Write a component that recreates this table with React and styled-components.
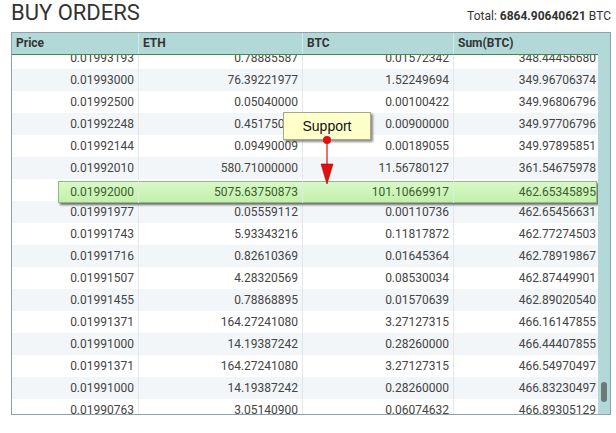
import React from 'react'
import styled, { createGlobalStyle } from 'styled-components'

const GlobalStyle = createGlobalStyle`
  body {
    margin: 0;
    background: #ffffff;
    font-family: Roboto, "Liberation Sans", Arial, sans-serif;
  }
`

const Page = styled.div`
  width: 616px;
  height: 433px;
  padding: 0 5px 0 11px;
  box-sizing: border-box;
  overflow: hidden;
`

const TopBar = styled.div`
  display: flex;
  align-items: flex-end;
  justify-content: space-between;
  height: 32px;
  box-sizing: border-box;
`

const Title = styled.h1`
  margin: 0 0 6px 0;
  font-size: 22px;
  font-weight: 400;
  color: #333333;
  line-height: 26px;
`

const Total = styled.div`
  font-size: 12px;
  color: #333333;
  margin: 0 0 9px 0;
  b {
    font-weight: 700;
  }
`

const Panel = styled.div`
  position: relative;
  display: flex;
  height: 383px;
  border: 1px solid #8fa2a8;
  background: #b3d8d8;
  box-sizing: border-box;
`

const Main = styled.div`
  flex: 1;
  display: flex;
  flex-direction: column;
  min-width: 0;
`

const cols = '126px 164px 151px 1fr'

const HeadRow = styled.div`
  display: grid;
  grid-template-columns: ${cols};
  height: 22px;
  border-bottom: 1px solid #3f8f3f;
  box-sizing: border-box;
`

const HeadCell = styled.div`
  font-size: 12px;
  font-weight: 700;
  color: #333333;
  line-height: 21px;
  padding-left: 4px;
  border-left: ${({ first }) => (first ? 'none' : '1px solid #d3e8e8')};
`

const Body = styled.div`
  flex: 1;
  overflow: hidden;
  background: #ffffff;
`

const Rows = styled.div`
  margin-top: -8px;
`

const Row = styled.div`
  position: relative;
  display: grid;
  grid-template-columns: ${cols};
  height: 22px;
  background: ${({ odd }) => (odd ? '#f2f6f8' : '#ffffff')};

  ${({ lifted }) =>
    lifted &&
    `
    z-index: 1;
    &::before {
      content: '';
      position: absolute;
      left: 46px;
      right: 1px;
      top: 2px;
      height: 20px;
      background: linear-gradient(#d8f9c8, #c2f1aa);
      border: 1px solid #93b882;
      box-shadow: 2px 2px 2px rgba(40, 40, 40, 0.65);
    }
  `}
`

const Cell = styled.div`
  position: relative;
  font-size: 12px;
  color: ${({ lifted }) => (lifted ? '#3b5d2c' : '#444444')};
  line-height: 22px;
  text-align: right;
  padding-right: ${({ last }) => (last ? '2px' : '4px')};
  border-left: ${({ first }) => (first ? 'none' : '1px solid #e2e8ea')};
  ${({ lifted }) => lifted && 'top: 2px;'}
`

const Scrollbar = styled.div`
  width: 12px;
  display: flex;
  flex-direction: column;
  align-items: center;
`

const Thumb = styled.div`
  margin-top: auto;
  margin-bottom: 12px;
  width: 6px;
  height: 20px;
  border-radius: 3px;
  background: #6c7a7c;
`

const Tooltip = styled.div`
  position: absolute;
  z-index: 2;
  left: 271px;
  top: 79px;
  width: 88px;
  height: 28px;
  background: #ffffcc;
  border: 1px solid #a7a78a;
  box-shadow: 2px 2px 2px rgba(70, 70, 70, 0.6);
  font-family: "Liberation Sans", Arial, sans-serif;
  font-size: 14px;
  color: #111111;
  display: flex;
  align-items: center;
  justify-content: center;
  box-sizing: border-box;
`

const Pointer = styled.svg`
  position: absolute;
  z-index: 3;
  left: 306px;
  top: 103px;
  overflow: visible;
`

const rows = [
  ['0.01993193', '0.78885587', '0.01572342', '348.44456680'],
  ['0.01993000', '76.39221977', '1.52249694', '349.96706374'],
  ['0.01992500', '0.05040000', '0.00100422', '349.96806796'],
  ['0.01992248', '0.45175000', '0.00900000', '349.97706796'],
  ['0.01992144', '0.09490009', '0.00189055', '349.97895851'],
  ['0.01992010', '580.71000000', '11.56780127', '361.54675978'],
  ['0.01992000', '5075.63750873', '101.10669917', '462.65345895'],
  ['0.01991977', '0.05559112', '0.00110736', '462.65456631'],
  ['0.01991743', '5.93343216', '0.11817872', '462.77274503'],
  ['0.01991716', '0.82610369', '0.01645364', '462.78919867'],
  ['0.01991507', '4.28320569', '0.08530034', '462.87449901'],
  ['0.01991455', '0.78868895', '0.01570639', '462.89020540'],
  ['0.01991371', '164.27241080', '3.27127315', '466.16147855'],
  ['0.01991000', '14.19387242', '0.28260000', '466.44407855'],
  ['0.01991371', '164.27241080', '3.27127315', '466.54970497'],
  ['0.01991000', '14.19387242', '0.28260000', '466.83230497'],
  ['0.01990763', '3.05140900', '0.06074632', '466.89305129'],
]

const headers = ['Price', 'ETH', 'BTC', 'Sum(BTC)']
const SUPPORT_ROW = 6

export default function App() {
  return (
    <Page>
      <GlobalStyle />
      <TopBar>
        <Title>BUY ORDERS</Title>
        <Total>
          Total: <b>6864.90640621</b> BTC
        </Total>
      </TopBar>
      <Panel>
        <Main>
          <HeadRow>
            {headers.map((h, i) => (
              <HeadCell key={h} first={i === 0}>{h}</HeadCell>
            ))}
          </HeadRow>
          <Body>
            <Rows>
              {rows.map((r, i) => {
                const lifted = i === SUPPORT_ROW
                return (
                  <Row key={i} odd={i % 2 === 1 && !lifted} lifted={lifted}>
                    {r.map((v, j) => (
                      <Cell key={j} first={j === 0} last={j === 3} lifted={lifted}>
                        {v}
                      </Cell>
                    ))}
                  </Row>
                )
              })}
            </Rows>
          </Body>
        </Main>
        <Scrollbar>
          <Thumb />
        </Scrollbar>
        <Tooltip>Support</Tooltip>
        <Pointer width="20" height="50" viewBox="0 0 20 50">
          <line x1="9" y1="4" x2="9" y2="30" stroke="#e01010" strokeWidth="1.2" />
          <circle cx="9" cy="4" r="4" fill="#e01010" />
          <path d="M3 28 L15 28 L9 48 Z" fill="#e01010" stroke="#b00000" strokeWidth="0.6" />
        </Pointer>
      </Panel>
    </Page>
  )
}
